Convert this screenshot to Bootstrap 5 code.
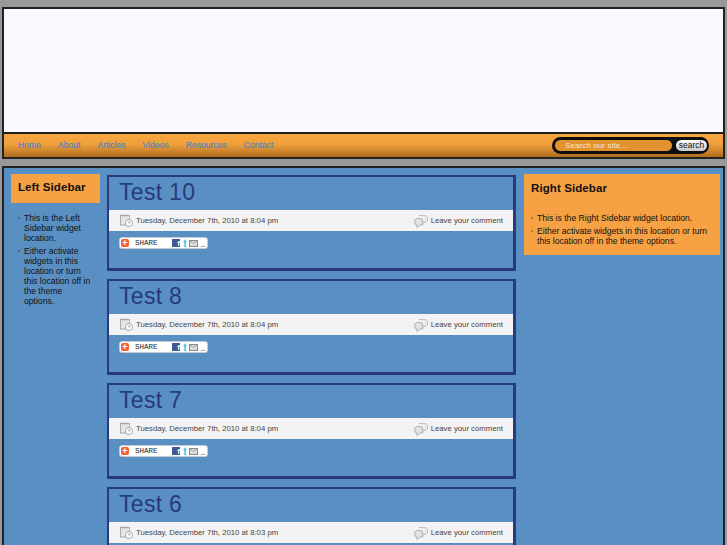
<!DOCTYPE html>
<html lang="en">
<head>
  <meta charset="UTF-8">
  <title>Test Blog</title>
  <link href="https://cdn.jsdelivr.net/npm/bootstrap@5.3.0/dist/css/bootstrap.min.css" rel="stylesheet">
  <style>
    html, body { height: 545px; overflow: hidden; }
    body {
      background-color: #999;
      font-family: "Liberation Sans", Arial, sans-serif;
      font-size: 9px;
      color: #111;
    }
    .page-top {
      margin: 7px 2px 0 2px;
      border: 2px solid #222;
    }
    .top-banner { height: 123px; background-color: #f9f9fe; }
    .top-nav {
      height: 25px;
      border-top: 2px solid #1d1d1d;
      background: linear-gradient(#f7a63f, #f0a03c 45%, #ae6c1f);
      padding: 0 14px 0 14px;
    }
    .top-nav a {
      color: #5587bb;
      font-size: 8.6px;
      font-weight: 400;
      text-decoration: none;
      -webkit-text-stroke: .2px #5587bb;
      margin-right: 17px;
    }
    .search-box {
      width: 157px;
      height: 17px;
      background-color: #0d0d0d;
      border-radius: 9px;
      padding: 2px;
      margin-top: -1px;
    }
    .search-field {
      flex: 1;
      height: 13px;
      background-color: #e2932f;
      border: 1px solid #0d0d0d;
      border-radius: 7px;
      color: #f9e8cf;
      font-size: 8px;
      line-height: 11px;
      letter-spacing: .1px;
      padding-left: 10px;
    }
    .search-btn {
      width: 31px;
      height: 11px;
      margin-left: 3px;
      background: linear-gradient(#fff, #c8c8c8);
      border-radius: 6px;
      color: #111;
      font-size: 8.5px;
      line-height: 10px;
      text-align: center;
    }
    .page-main {
      margin: 7px 2px 0 2px;
      height: 400px;
      border: 2px solid #222;
      border-bottom: 0;
      background-color: #5a8fc3;
      padding: 6px 5px 0 7px;
      gap: 7px;
      overflow: hidden;
    }
    .left-col { width: 89px; flex: none; }
    .mid-col { width: 409px; flex: none; padding-top: 1px; }
    .right-col { width: 196px; flex: none; margin-left: 1px; }
    .side-title {
      font-size: 11.5px;
      font-weight: 700;
      letter-spacing: .1px;
      color: #111;
      margin: 0;
    }
    .left-title { background-color: #f6a143; padding: 7px 7px 0 7px; height: 29px; }
    .side-list {
      list-style: none;
      margin: 0;
      padding: 0;
      font-size: 8.6px;
      line-height: 10px;
    }
    .side-list li { position: relative; padding-left: 13px; margin-bottom: 3px; }
    .side-list li::before {
      content: "";
      position: absolute;
      left: 7px;
      top: 4px;
      width: 2px;
      height: 2px;
      background-color: #3d6a98;
    }
    .left-col .side-list { margin-top: 10px; padding-right: 9px; }
    .right-box { background-color: #f6a143; height: 81px; padding: 8px 7px 0 7px; }
    .right-box .side-list { margin-top: 17px; }
    .right-box .side-list li { padding-left: 6px; }
    .right-box .side-list li::before { left: 0; background-color: #b97a30; }
    .post-box {
      height: 96px;
      border-style: solid;
      border-color: #29397f;
      border-width: 2px 3px 3px 2px;
      margin-bottom: 8px;
    }
    .post-title {
      font-family: "Liberation Sans", Arial, sans-serif;
      font-size: 23px;
      font-weight: 400;
      line-height: 28px;
      letter-spacing: .3px;
      color: #29397f;
      margin: 1px 0 4px 10px;
    }
    .post-meta {
      height: 21px;
      background-color: #f3f3f3;
      color: #444;
      font-size: 7.75px;
      padding: 0 10px 0 11px;
    }
    .meta-icon { flex: none; margin-right: 3px; }
    .share-btn {
      width: 89px;
      height: 12px;
      margin: 6px 0 0 10px;
      background-color: #fff;
      border: 1px solid #c4cbd6;
      border-radius: 3px;
      padding-left: 1px;
      color: #222;
    }
    .share-plus {
      width: 8px;
      height: 8px;
      background-color: #f0622d;
      border-radius: 2px;
      color: #fff;
      font-size: 9px;
      font-weight: 700;
      line-height: 8px;
      text-align: center;
    }
    .share-word {
      margin-left: 6px;
      width: 37px;
      padding-top: 1px;
      font-family: "Liberation Mono", monospace;
      font-size: 7.5px;
    }
    .share-fb {
      width: 8px;
      height: 8px;
      background-color: #3b5998;
      color: #fff;
      font-size: 8px;
      font-weight: 700;
      line-height: 9px;
      text-align: right;
      overflow: hidden;
    }
    .share-tw { width: 8px; margin-left: 1px; color: #29c5f0; font-size: 10px; font-weight: 700; line-height: 9px; text-align: center; }
    .share-dots { margin-left: 3px; font-size: 7px; color: #555; }
  </style>
</head>
<body>

<div class="page-top">
  <div class="top-banner"></div>
  <nav class="top-nav d-flex align-items-center justify-content-between">
    <div class="d-flex align-items-center">
      <a href="#">Home</a>
      <a href="#">About</a>
      <a href="#">Articles</a>
      <a href="#">Videos</a>
      <a href="#">Resources</a>
      <a href="#">Contact</a>
    </div>
    <div class="search-box d-flex align-items-center">
      <div class="search-field">Search our site...</div>
      <div class="search-btn">search</div>
    </div>
  </nav>
</div>

<div class="page-main d-flex">
  <aside class="left-col">
    <div class="left-title"><h2 class="side-title">Left Sidebar</h2></div>
    <ul class="side-list">
      <li>This is the Left Sidebar widget location.</li>
      <li>Either activate widgets in this location or turn this location off in the theme options.</li>
    </ul>
  </aside>

  <main class="mid-col" id="posts"></main>

  <aside class="right-col">
    <div class="right-box">
      <h2 class="side-title">Right Sidebar</h2>
      <ul class="side-list">
        <li>This is the Right Sidebar widget location.</li>
        <li>Either activate widgets in this location or turn this location off in the theme options.</li>
      </ul>
    </div>
  </aside>
</div>

<script>
  // last post's share bar falls below the window, so it is left out
  const posts = [
    ["Test 10", "8:04 pm", true],
    ["Test 8", "8:04 pm", true],
    ["Test 7", "8:04 pm", true],
    ["Test 6", "8:03 pm", false]
  ];
  const calIcon = `<svg class="meta-icon" width="13" height="13" viewBox="0 0 13 13" fill="none">
    <rect x=".5" y="1.5" width="9" height="9.5" fill="#e6e6e6" stroke="#aaa"/>
    <path d="M2 .5v2M4.5 .5v2M7 .5v2" stroke="#999"/>
    <circle cx="9" cy="9" r="3.5" fill="#fff" stroke="#aaa"/>
    <path d="M9 7v2h1.5" stroke="#888" stroke-width=".8"/></svg>`;
  const bubbleIcon = `<svg class="meta-icon" width="15" height="14" viewBox="0 0 15 14" fill="none">
    <path d="M6 1.5h4.5a3.5 3 0 0 1 0 7H10v2l-2-2" fill="#eee" stroke="#bbb"/>
    <path d="M4.5 4.5h2a3.5 3.5 0 0 1 0 7H6l-2 2v-2.2a3.5 3.5 0 0 1 .5-6.8z" fill="#e2e2e2" stroke="#aaa"/></svg>`;
  const mailIcon = `<svg width="9" height="7" viewBox="0 0 9 7" fill="none">
    <rect x=".5" y=".5" width="8" height="6" fill="#ddd" stroke="#888"/>
    <path d="M.5 .5l4 3 4-3" stroke="#888" stroke-width=".7"/></svg>`;
  const shareBar = `
      <div class="share-btn d-flex align-items-center">
        <span class="share-plus">+</span>
        <span class="share-word">SHARE</span>
        <span class="share-fb">f</span>
        <span class="share-tw">t</span>
        ${mailIcon}
        <span class="share-dots">_</span>
      </div>`;

  document.getElementById("posts").innerHTML = posts.map(p => `
    <article class="post-box">
      <h1 class="post-title">${p[0]}</h1>
      <div class="post-meta d-flex align-items-center justify-content-between">
        <div class="d-flex align-items-center">${calIcon}<span>Tuesday, December 7th, 2010 at ${p[1]}</span></div>
        <div class="d-flex align-items-center">${bubbleIcon}<span>Leave your comment</span></div>
      </div>${p[2] ? shareBar : ""}
    </article>`).join("");
</script>

<script src="https://cdn.jsdelivr.net/npm/bootstrap@5.3.0/dist/js/bootstrap.bundle.min.js"></script>
</body>
</html>
